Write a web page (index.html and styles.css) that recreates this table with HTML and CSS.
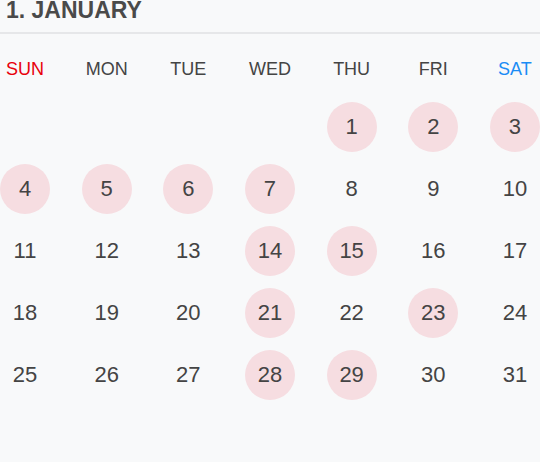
FILE: index.html
```html
<!DOCTYPE html>
<html>
<head>
<meta charset="utf-8">
<link rel="stylesheet" href="styles.css">
</head>
<body>
<div class="calendar">
  <div class="title">1. JANUARY</div>
  <div class="weekdays">
    <div class="wd sun">SUN</div>
    <div class="wd">MON</div>
    <div class="wd">TUE</div>
    <div class="wd">WED</div>
    <div class="wd">THU</div>
    <div class="wd">FRI</div>
    <div class="wd sat">SAT</div>
  </div>
  <div class="days">
    <div class="day"></div>
    <div class="day"></div>
    <div class="day"></div>
    <div class="day"></div>
    <div class="day on">1</div>
    <div class="day on">2</div>
    <div class="day on">3</div>
    <div class="day on">4</div>
    <div class="day on">5</div>
    <div class="day on">6</div>
    <div class="day on">7</div>
    <div class="day">8</div>
    <div class="day">9</div>
    <div class="day">10</div>
    <div class="day">11</div>
    <div class="day">12</div>
    <div class="day">13</div>
    <div class="day on">14</div>
    <div class="day on">15</div>
    <div class="day">16</div>
    <div class="day">17</div>
    <div class="day">18</div>
    <div class="day">19</div>
    <div class="day">20</div>
    <div class="day on">21</div>
    <div class="day">22</div>
    <div class="day on">23</div>
    <div class="day">24</div>
    <div class="day">25</div>
    <div class="day">26</div>
    <div class="day">27</div>
    <div class="day on">28</div>
    <div class="day on">29</div>
    <div class="day">30</div>
    <div class="day">31</div>
  </div>
</div>
</body>
</html>
```
FILE: styles.css
```css
html, body {
  margin: 0;
  padding: 0;
  background: #f8f9fa;
}
body {
  width: 540px;
  height: 462px;
  overflow: hidden;
  font-family: "Liberation Sans", Arial, sans-serif;
  color: #444;
}
.title {
  font-size: 23px;
  font-weight: bold;
  line-height: 20px;
  color: #4a4a4a;
  padding: 0 0 12px 6px;
  border-bottom: 2px solid #e6e7e9;
}
.weekdays {
  display: grid;
  grid-template-columns: repeat(7, 50px);
  justify-content: space-between;
  padding-top: 25px;
}
.wd {
  text-align: center;
  font-size: 18px;
  line-height: 20px;
  color: #444;
}
.wd.sun { color: #e8000b; }
.wd.sat { color: #1a8cf5; }
.days {
  display: grid;
  grid-template-columns: repeat(7, 50px);
  grid-auto-rows: 50px;
  justify-content: space-between;
  row-gap: 12px;
  margin-top: 23px;
}
.day {
  display: flex;
  align-items: center;
  justify-content: center;
  font-size: 22px;
  color: #444;
  border-radius: 50%;
}
.day.on {
  background: #f6dde1;
}
```
